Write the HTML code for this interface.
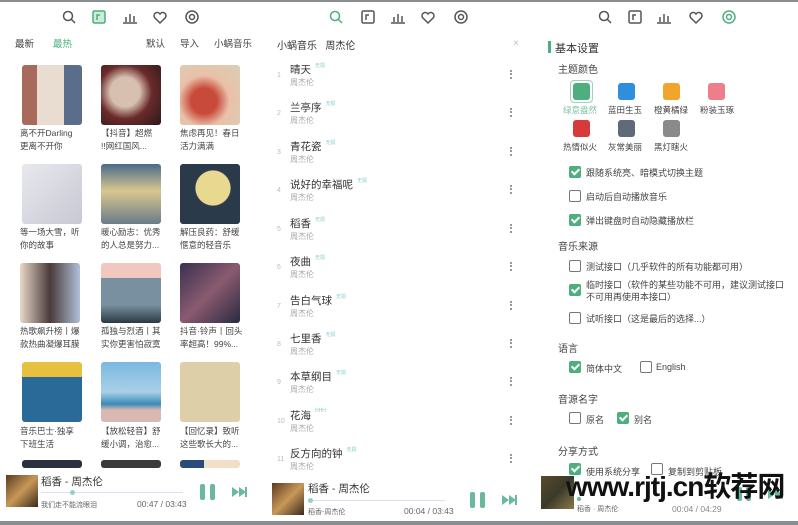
<!DOCTYPE html>
<html><head><meta charset="utf-8"><style>
*{margin:0;padding:0;box-sizing:border-box}
body{width:798px;height:525px;background:#fff;position:relative;overflow:hidden;font-family:"Liberation Sans","Noto Sans CJK SC",sans-serif;color:#333}
.a{position:absolute;white-space:nowrap}
.ic{position:absolute;top:9px}
.cv{position:absolute;width:60px;height:60px;border-radius:3px}
.cap{position:absolute;font-size:8.5px;line-height:13px;color:#444;width:64px;white-space:normal}
.t{position:absolute;left:290px;font-size:10.5px;color:#333}
.t i{font-style:normal;font-size:5px;color:#8cc;margin-left:4px;vertical-align:top}
.ar{position:absolute;left:290px;font-size:8px;color:#aaa}
.n{position:absolute;left:277px;font-size:7px;color:#bbb}
.d{position:absolute;left:510px;width:2px;height:9px;border-left:2px dotted #999}
.cb{position:absolute;width:12px;height:12px;border:1.3px solid #777;border-radius:2px;background:#fff}
.cb.on{background:#4caf7d;border-color:#4caf7d}
.cb.on:after{content:"";position:absolute;left:3px;top:0px;width:3px;height:6px;border:solid #fff;border-width:0 2px 2px 0;transform:rotate(45deg)}
.lb{position:absolute;font-size:9px;color:#444}
.h{position:absolute;font-size:10px;color:#444}
.sw{position:absolute;width:17px;height:17px;border-radius:3px}
.sl{position:absolute;font-size:8.5px;color:#444}
</style></head><body>
<div class="a" style="left:0;top:0;width:798px;height:2px;background:#8a8d92"></div>
<div class="a" style="left:0;top:521px;width:798px;height:4px;background:#8a8d92"></div>

<svg class="ic" style="left:0" width="798" height="18" viewBox="0 0 798 18" fill="none" stroke="#555" stroke-width="1.5">
<g>
<circle cx="68" cy="7" r="4.5"/><path d="M71 10l4 4"/>
<rect x="93" y="2" width="12" height="12" rx="1.5" stroke="#4caf7d" fill="#cfe9dc"/><path d="M97 11v-5h3" stroke="#4caf7d"/>
<path d="M123 14h14M126 13v-5M130 13v-8M134 13v-6"/>
<path d="M160 14l-5.5-5.5a3.2 3.2 0 015.5-3.5a3.2 3.2 0 015.5 3.5z"/>
<circle cx="192" cy="8" r="6"/><circle cx="192" cy="8" r="2.5"/>
</g>
<g>
<circle cx="335" cy="7" r="4.5" stroke="#4caf7d"/><path d="M338 10l4 4" stroke="#4caf7d"/>
<rect x="362" y="2" width="12" height="12" rx="1.5"/><path d="M366 11v-5h3"/>
<path d="M391 14h14M394 13v-5M398 13v-8M402 13v-6"/>
<path d="M428 14l-5.5-5.5a3.2 3.2 0 015.5-3.5a3.2 3.2 0 015.5 3.5z"/>
<circle cx="461" cy="8" r="6"/><circle cx="461" cy="8" r="2.5"/>
</g>
<g>
<circle cx="604" cy="7" r="4.5"/><path d="M607 10l4 4"/>
<rect x="629" y="2" width="12" height="12" rx="1.5"/><path d="M633 11v-5h3"/>
<path d="M657 14h14M660 13v-5M664 13v-8M668 13v-6"/>
<path d="M696 14l-5.5-5.5a3.2 3.2 0 015.5-3.5a3.2 3.2 0 015.5 3.5z"/>
<circle cx="729" cy="8" r="6" stroke="#4caf7d"/><circle cx="729" cy="8" r="2.5" stroke="#4caf7d"/>
</g>
</svg>

<div class="a" style="left:15px;top:36px;font-size:9.5px;color:#444">最新</div>
<div class="a" style="left:53px;top:36px;font-size:9.5px;color:#4caf7d">最热</div>
<div class="a" style="left:146px;top:36px;font-size:9.5px;color:#444">默认</div>
<div class="a" style="left:180px;top:36px;font-size:9.5px;color:#444">导入</div>
<div class="a" style="left:214px;top:36px;font-size:9.5px;color:#444">小蜗音乐</div>

<div class="cv" style="left:22px;top:65px;background:linear-gradient(90deg,#a86a5a 0 25%,#e8ddd0 25% 70%,#5a6e8c 70%)"></div>
<div class="cv" style="left:101px;top:65px;background:radial-gradient(circle at 40% 45%,#d8c0b0 0 30%,#6a2a2a 55%,#2a1a1a)"></div>
<div class="cv" style="left:180px;top:65px;background:radial-gradient(circle at 40% 60%,#c84a3a 0 25%,#eac0a8 50%,#d8d0b8)"></div>
<div class="cap" style="left:20px;top:127px">离不开Darling<br>更离不开你</div>
<div class="cap" style="left:101px;top:127px">【抖音】超燃<br>!!网红国风...</div>
<div class="cap" style="left:180px;top:127px">焦虑再见！春日<br>活力满满</div>

<div class="cv" style="left:22px;top:164px;background:linear-gradient(135deg,#e8e8ee,#c8c8d4)"></div>
<div class="cv" style="left:101px;top:164px;background:linear-gradient(180deg,#4a6a88,#d8c890 45%,#6a7a88)"></div>
<div class="cv" style="left:180px;top:164px;background:radial-gradient(circle at 55% 40%,#e8d890 0 35%,#2a3a4a 37%)"></div>
<div class="cap" style="left:20px;top:226px">等一场大雪，听<br>你的故事</div>
<div class="cap" style="left:101px;top:226px">暖心励志：优秀<br>的人总是努力...</div>
<div class="cap" style="left:180px;top:226px">解压良药：舒缓<br>惬意的轻音乐</div>

<div class="cv" style="left:20px;top:263px;background:linear-gradient(90deg,#e8d8c8,#4a3a3a 50%,#b0c0d8)"></div>
<div class="cv" style="left:101px;top:263px;background:linear-gradient(180deg,#f0c8c0 0 25%,#7890a0 25% 70%,#2a3a40)"></div>
<div class="cv" style="left:180px;top:263px;background:linear-gradient(135deg,#3a3050,#8a5a70,#2a2a40)"></div>
<div class="cap" style="left:20px;top:325px">热歌飙升榜丨爆<br>款热曲凝爆耳膜</div>
<div class="cap" style="left:101px;top:325px">孤独与烈酒丨其<br>实你更害怕寂寞</div>
<div class="cap" style="left:180px;top:325px">抖音·铃声丨回头<br>率超高！99%...</div>

<div class="cv" style="left:22px;top:362px;background:linear-gradient(180deg,#e8c040 0 25%,#2a6a98 25%)"></div>
<div class="cv" style="left:101px;top:362px;background:linear-gradient(180deg,#7ab8e0,#a8d0e8 50%,#3a8ab8 70%,#d8b8b0 80%)"></div>
<div class="cv" style="left:180px;top:362px;background:#ddd0a8"></div>
<div class="cap" style="left:20px;top:425px">音乐巴士·独享<br>下班生活</div>
<div class="cap" style="left:101px;top:425px">【放松轻音】舒<br>缓小调，治愈...</div>
<div class="cap" style="left:180px;top:425px">【回忆录】致听<br>这些歌长大的...</div>

<div class="cv" style="left:22px;top:460px;height:8px;background:#2a3040"></div>
<div class="cv" style="left:101px;top:460px;height:8px;background:#3a3a3a"></div>
<div class="cv" style="left:180px;top:460px;height:8px;background:linear-gradient(90deg,#2a4a7a 40%,#f0e0c8 40%)"></div>

<div class="a" style="left:0;top:468px;width:265px;height:53px;background:#fff"></div>
<div class="a" style="left:6px;top:475px;width:32px;height:32px;background:linear-gradient(135deg,#5a3a20,#c89858,#3a2a1a)"></div>
<div class="a" style="left:41px;top:474px;font-size:10.5px">稻香 - 周杰伦</div>
<div class="a" style="left:41px;top:492px;width:142px;height:1px;background:#dde"></div>
<div class="a" style="left:70px;top:490px;width:5px;height:5px;border-radius:50%;background:#9cc"></div>
<div class="a" style="left:41px;top:500px;font-size:7px;color:#666">我们走不能流眼泪</div>
<div class="a" style="left:137px;top:499px;font-size:8.5px;color:#666">00:47 / 03:43</div>
<div class="a" style="left:200px;top:484px;width:5px;height:16px;background:#6ab99a;border-radius:2px"></div>
<div class="a" style="left:210px;top:484px;width:5px;height:16px;background:#6ab99a;border-radius:2px"></div>
<svg class="a" style="left:232px;top:486px" width="16" height="12"><path d="M0 1l7 5-7 5zM7 1l7 5-7 5z" fill="#6ab99a"/><rect x="13" y="1" width="2" height="10" fill="#6ab99a"/></svg>

<div class="a" style="left:277px;top:37px;font-size:10px;color:#333">小蜗音乐&nbsp;&nbsp;&nbsp;周杰伦</div>
<div class="a" style="left:513px;top:38px;font-size:10px;color:#bbb">×</div>

<div class="n" style="top:72px">1</div><div class="t" style="top:62px">晴天<i>无损</i></div><div class="ar" style="top:77px">周杰伦</div><div class="d" style="top:70px"></div>
<div class="n" style="top:110px">2</div><div class="t" style="top:100px">兰亭序<i>无损</i></div><div class="ar" style="top:115px">周杰伦</div><div class="d" style="top:108px"></div>
<div class="n" style="top:149px">3</div><div class="t" style="top:139px">青花瓷<i>无损</i></div><div class="ar" style="top:154px">周杰伦</div><div class="d" style="top:147px"></div>
<div class="n" style="top:187px">4</div><div class="t" style="top:177px">说好的幸福呢<i>无损</i></div><div class="ar" style="top:192px">周杰伦</div><div class="d" style="top:185px"></div>
<div class="n" style="top:226px">5</div><div class="t" style="top:216px">稻香<i>无损</i></div><div class="ar" style="top:231px">周杰伦</div><div class="d" style="top:224px"></div>
<div class="n" style="top:264px">6</div><div class="t" style="top:254px">夜曲<i>无损</i></div><div class="ar" style="top:269px">周杰伦</div><div class="d" style="top:262px"></div>
<div class="n" style="top:303px">7</div><div class="t" style="top:293px">告白气球<i>无损</i></div><div class="ar" style="top:308px">周杰伦</div><div class="d" style="top:301px"></div>
<div class="n" style="top:341px">8</div><div class="t" style="top:331px">七里香<i>无损</i></div><div class="ar" style="top:346px">周杰伦</div><div class="d" style="top:339px"></div>
<div class="n" style="top:379px">9</div><div class="t" style="top:369px">本草纲目<i>无损</i></div><div class="ar" style="top:384px">周杰伦</div><div class="d" style="top:377px"></div>
<div class="n" style="top:418px">10</div><div class="t" style="top:408px">花海<i>HHH</i></div><div class="ar" style="top:423px">周杰伦</div><div class="d" style="top:416px"></div>
<div class="n" style="top:456px">11</div><div class="t" style="top:446px">反方向的钟<i>无损</i></div><div class="ar" style="top:461px">周杰伦</div><div class="d" style="top:454px"></div>

<div class="a" style="left:265px;top:475px;width:270px;height:46px;background:#fff"></div>
<div class="a" style="left:272px;top:483px;width:32px;height:32px;background:linear-gradient(135deg,#5a3a20,#c89858,#3a2a1a)"></div>
<div class="a" style="left:308px;top:481px;font-size:10.5px">稻香 - 周杰伦</div>
<div class="a" style="left:308px;top:500px;width:137px;height:1px;background:#dde"></div>
<div class="a" style="left:308px;top:498px;width:5px;height:5px;border-radius:50%;background:#9cc"></div>
<div class="a" style="left:308px;top:507px;font-size:7px;color:#666">稻香-周杰伦</div>
<div class="a" style="left:404px;top:506px;font-size:8.5px;color:#666">00:04 / 03:43</div>
<div class="a" style="left:470px;top:492px;width:5px;height:16px;background:#6ab99a;border-radius:2px"></div>
<div class="a" style="left:480px;top:492px;width:5px;height:16px;background:#6ab99a;border-radius:2px"></div>
<svg class="a" style="left:502px;top:494px" width="16" height="12"><path d="M0 1l7 5-7 5zM7 1l7 5-7 5z" fill="#6ab99a"/><rect x="13" y="1" width="2" height="10" fill="#6ab99a"/></svg>

<div class="a" style="left:548px;top:41px;width:3px;height:12px;background:#4caf7d"></div>
<div class="a" style="left:555px;top:40px;font-size:11px;color:#333">基本设置</div>
<div class="h" style="left:558px;top:61px">主题颜色</div>
<div class="a" style="left:570px;top:80px;width:23px;height:23px;border:1.5px solid #9fd4b8;border-radius:4px"></div>
<div class="sw" style="left:573px;top:83px;background:#4caf7d"></div>
<div class="sw" style="left:618px;top:83px;background:#2f8fdc"></div>
<div class="sw" style="left:663px;top:83px;background:#f2a52c"></div>
<div class="sw" style="left:708px;top:83px;background:#ee7f8a"></div>
<div class="sl" style="left:563px;top:104px;color:#7cc4a0">绿意盎然</div>
<div class="sl" style="left:608px;top:104px">蓝田生玉</div>
<div class="sl" style="left:654px;top:104px">橙黄橘绿</div>
<div class="sl" style="left:700px;top:104px">粉装玉琢</div>
<div class="sw" style="left:573px;top:120px;background:#d63a3a"></div>
<div class="sw" style="left:618px;top:120px;background:#5f6b79"></div>
<div class="sw" style="left:663px;top:120px;background:#8a8a8a"></div>
<div class="sl" style="left:563px;top:141px">热情似火</div>
<div class="sl" style="left:608px;top:141px">灰常美丽</div>
<div class="sl" style="left:654px;top:141px">黑灯瞎火</div>

<div class="cb on" style="left:569px;top:166px"></div><div class="lb" style="left:586px;top:166px">跟随系统亮、暗模式切换主题</div>
<div class="cb" style="left:569px;top:190px"></div><div class="lb" style="left:586px;top:190px">启动后自动播放音乐</div>
<div class="cb on" style="left:569px;top:214px"></div><div class="lb" style="left:586px;top:214px">弹出键盘时自动隐藏播放栏</div>
<div class="h" style="left:558px;top:238px">音乐来源</div>
<div class="cb" style="left:569px;top:260px"></div><div class="lb" style="left:586px;top:260px">测试接口（几乎软件的所有功能都可用）</div>
<div class="cb on" style="left:569px;top:284px"></div><div class="lb" style="left:586px;top:279px;line-height:12px">临时接口（软件的某些功能不可用，建议测试接口<br>不可用再使用本接口）</div>
<div class="cb" style="left:569px;top:312px"></div><div class="lb" style="left:586px;top:312px">试听接口（这是最后的选择...）</div>
<div class="h" style="left:558px;top:340px">语言</div>
<div class="cb on" style="left:569px;top:361px"></div><div class="lb" style="left:586px;top:362px">简体中文</div>
<div class="cb" style="left:640px;top:361px"></div><div class="lb" style="left:656px;top:362px">English</div>
<div class="h" style="left:558px;top:391px">音源名字</div>
<div class="cb" style="left:569px;top:412px"></div><div class="lb" style="left:586px;top:413px">原名</div>
<div class="cb on" style="left:617px;top:412px"></div><div class="lb" style="left:634px;top:413px">别名</div>
<div class="h" style="left:558px;top:443px">分享方式</div>
<div class="cb on" style="left:569px;top:463px"></div><div class="lb" style="left:586px;top:465px">使用系统分享</div>
<div class="cb" style="left:651px;top:463px"></div><div class="lb" style="left:668px;top:465px">复制到剪贴板</div>

<div class="a" style="left:541px;top:476px;width:33px;height:33px;background:linear-gradient(135deg,#5a4a2a,#3a3a2a,#8a7a4a)"></div>
<div class="a" style="left:577px;top:497px;width:4px;height:4px;border-radius:50%;background:#6ab99a"></div>
<div class="a" style="left:577px;top:504px;font-size:7px;color:#666">稻香 · 周杰伦</div>
<div class="a" style="left:672px;top:504px;font-size:8.5px;color:#888">00:04 / 04:29</div>
<div class="a" style="left:737px;top:487px;width:5px;height:14px;background:#6ab99a;border-radius:2px"></div>
<div class="a" style="left:746px;top:487px;width:5px;height:14px;background:#6ab99a;border-radius:2px"></div>
<svg class="a" style="left:768px;top:488px" width="16" height="12"><path d="M0 1l7 5-7 5zM7 1l7 5-7 5z" fill="#6ab99a"/><rect x="13" y="1" width="2" height="10" fill="#6ab99a"/></svg>
<div class="a" style="left:566px;top:465px;font-size:28px;font-weight:bold;color:#111;letter-spacing:-1px">www.rjtj.cn软荐网</div>
</body></html>
